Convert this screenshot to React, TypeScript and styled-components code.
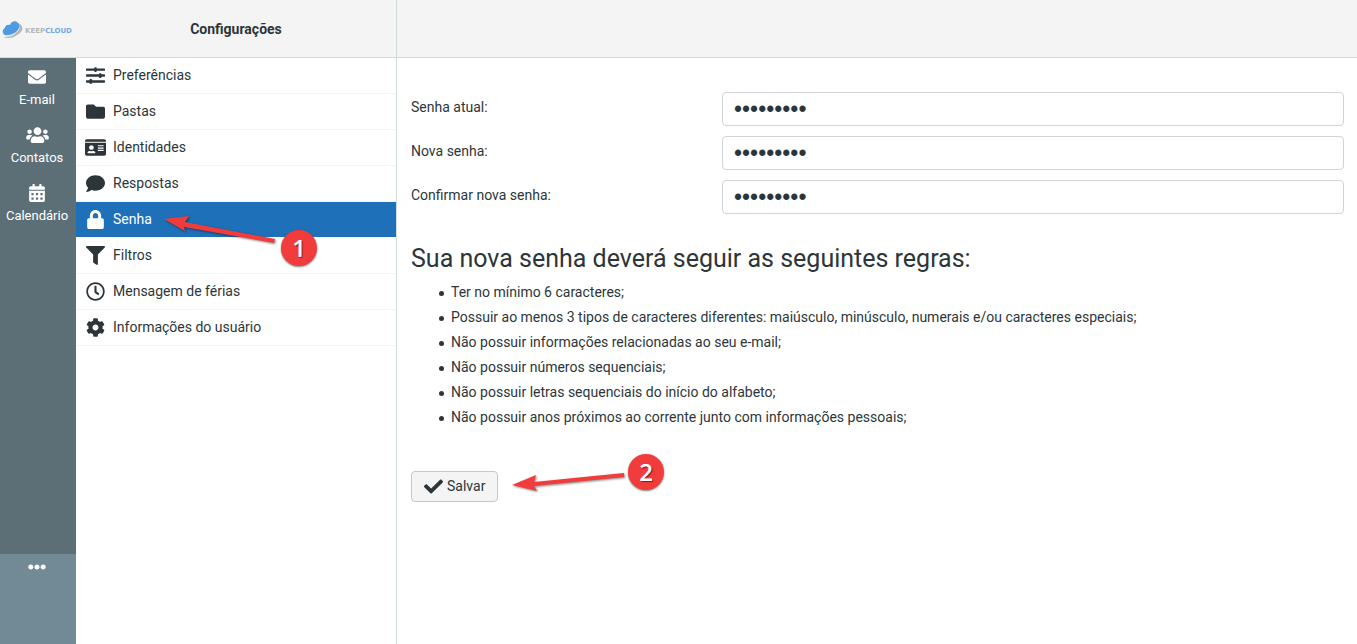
import React from 'react';
import styled, { createGlobalStyle } from 'styled-components';
import type { IconType } from 'react-icons';
import {
  FaCalendarAlt, FaCheck, FaCog, FaComment, FaEllipsisH, FaEnvelope, FaFilter,
  FaFolder, FaIdCard, FaLock, FaRegClock, FaSlidersH, FaUsers,
} from 'react-icons/fa';

const ink = '#2c363a';
const line = '#d4dbde';

const GlobalStyle = createGlobalStyle`
  * { box-sizing: border-box; }
  body {
    margin: 0;
    background: #fff;
    color: ${ink};
    font: 14px/21px Roboto, sans-serif;
  }
`;

const Page = styled.div`
  position: relative;
  display: flex;
  min-height: 100vh;
`;

const TaskBar = styled.div`
  display: flex;
  flex-direction: column;
  flex: 0 0 76px;
  background: #5c6f77;
`;

const PaneHeader = styled.header`
  display: flex;
  align-items: center;
  justify-content: center;
  height: 58px;
  padding-top: 2px;
  background: #f4f4f4;
  border-bottom: 1px solid ${line};
`;

const Logo = styled.a`
  display: flex;
  align-items: center;
  width: 100%;
  padding-left: 2px;
  gap: 2px;
  text-decoration: none;
  font: bold 7px/8px 'DejaVu Sans', sans-serif;
  color: #b4b7ba;
  svg { flex-shrink: 0; }
`;

const LogoName = styled.span`
  padding-top: 3px;
`;

const LogoAccent = styled.span`
  color: #74abe0;
`;

const TaskNav = styled.nav`
  flex: 1;
  display: flex;
  flex-direction: column;
`;

const TaskLink = styled.a`
  display: flex;
  flex-direction: column;
  align-items: center;
  height: 58px;
  padding-top: 10px;
  padding-right: 2px;
  gap: 4px;
  color: #fff;
  font-size: 13px;
  line-height: 20px;
  text-decoration: none;
  svg { height: 18px; }
`;

const MoreButton = styled.button`
  display: flex;
  justify-content: center;
  height: 90px;
  padding: 4px 2px 0 0;
  border: 0;
  background: #728a95;
  color: #fff;
`;

const SettingsPane = styled.div`
  flex: 0 0 321px;
  border-right: 1px solid ${line};
`;

const PaneTitle = styled.h1`
  margin: 0;
  font-size: 14px;
  font-weight: 700;
`;

const SettingsLink = styled.a<{ $active?: boolean }>`
  display: flex;
  align-items: center;
  height: 36px;
  padding: 0 9px;
  gap: 7px;
  border-bottom: 1px solid ${p => (p.$active ? '#fff' : '#f1f3f4')};
  background: ${p => (p.$active ? '#1e70b9' : 'transparent')};
  background-clip: padding-box;
  color: ${p => (p.$active ? '#fff' : ink)};
  text-decoration: none;
`;

const IconSlot = styled.span`
  display: flex;
  justify-content: center;
  flex: 0 0 21px;
`;

const Content = styled.main`
  flex: 1;
  min-width: 0;
`;

const PasswordForm = styled.form`
  padding: 34px 13px 14px 14px;
`;

const Field = styled.div`
  display: grid;
  grid-template-columns: 1fr 2fr;
  margin-bottom: 10px;
`;

const Label = styled.label`
  padding-top: 5px;
`;

const PasswordInput = styled.input`
  width: 100%;
  height: 34px;
  padding: 0 11px;
  border: 1px solid #ced4da;
  border-radius: 4px;
  background: #fff;
  color: ${ink};
  font: 23px/32px 'Liberation Sans', sans-serif;
`;

const RulesTitle = styled.h2`
  margin: 30px 0 6px;
  font-size: 25px;
  line-height: 30px;
  font-weight: 400;
`;

const Rules = styled.ul`
  margin: 0 0 41px;
  padding-left: 28px;
  line-height: 25px;
  list-style: none;
`;

const Rule = styled.li`
  display: flex;
  align-items: center;
  gap: 7px;
  &::before {
    content: '';
    flex: 0 0 5px;
    height: 5px;
    margin-top: 2px;
    border-radius: 50%;
    background: ${ink};
  }
`;

const SaveButton = styled.button`
  display: flex;
  align-items: center;
  height: 31px;
  padding: 0 12px;
  gap: 4px;
  border: 1px solid #c5c8ca;
  border-radius: 4px;
  background: #f4f4f4;
  color: ${ink};
  font: 14px/21px Roboto, sans-serif;
`;

const Arrows = styled.svg`
  position: absolute;
  top: 0;
  left: 0;
  pointer-events: none;
  filter: drop-shadow(1px 1px 1px rgba(0, 0, 0, 0.5));
`;

const Step = styled.span<{ $x: number; $y: number }>`
  position: absolute;
  left: ${p => p.$x}px;
  top: ${p => p.$y}px;
  width: 36px;
  height: 36px;
  border-radius: 50%;
  background: #f23c3c;
  box-shadow: 0 1px 2px rgba(0, 0, 0, 0.5);
  color: #fff;
  font: 600 24px/35px 'Open Sans', sans-serif;
  text-align: center;
  text-shadow: 1px 1px 1px rgba(0, 0, 0, 0.5);
`;

const tasks: { label: string; icon: IconType; size: number }[] = [
  { label: 'E-mail', icon: FaEnvelope, size: 18 },
  { label: 'Contatos', icon: FaUsers, size: 23 },
  { label: 'Calendário', icon: FaCalendarAlt, size: 18 },
];

const sections: { label: string; icon: IconType; size: number }[] = [
  { label: 'Preferências', icon: FaSlidersH, size: 19 },
  { label: 'Pastas', icon: FaFolder, size: 19 },
  { label: 'Identidades', icon: FaIdCard, size: 21 },
  { label: 'Respostas', icon: FaComment, size: 19 },
  { label: 'Senha', icon: FaLock, size: 19 },
  { label: 'Filtros', icon: FaFilter, size: 19 },
  { label: 'Mensagem de férias', icon: FaRegClock, size: 19 },
  { label: 'Informações do usuário', icon: FaCog, size: 19 },
];

const fields = [
  { id: 'current', label: 'Senha atual:' },
  { id: 'new', label: 'Nova senha:' },
  { id: 'confirm', label: 'Confirmar nova senha:' },
];

const rules = [
  'Ter no mínimo 6 caracteres;',
  'Possuir ao menos 3 tipos de caracteres diferentes: maiúsculo, minúsculo, numerais e/ou caracteres especiais;',
  'Não possuir informações relacionadas ao seu e-mail;',
  'Não possuir números sequenciais;',
  'Não possuir letras sequenciais do início do alfabeto;',
  'Não possuir anos próximos ao corrente junto com informações pessoais;',
];

export default function App() {
  return (
    <>
      <GlobalStyle />
      <Page>
        <TaskBar>
          <PaneHeader>
            <Logo href="#home">
              <svg width="21" height="18" viewBox="0 0 21 18">
                <path d="M18 3c4 3 3 8-3 11-4 3-9 4-14 2 5 0 10-1 13-4 3-2 4-5 4-9z" fill="#b4b6b8" />
                <path d="M3 14C0 13 0 8 3 7c0-3 3-4 5-3 1-4 6-5 8-2 2 1 2 3 1 5-2 5-9 8-14 7z" fill="#4f9be0" />
              </svg>
              <LogoName>KEEP<LogoAccent>CLOUD</LogoAccent></LogoName>
            </Logo>
          </PaneHeader>
          <TaskNav>
            {tasks.map(({ label, icon: Icon, size }) => (
              <TaskLink key={label} href="#task"><Icon size={size} />{label}</TaskLink>
            ))}
          </TaskNav>
          <MoreButton type="button" aria-label="Mais"><FaEllipsisH size={18} /></MoreButton>
        </TaskBar>
        <SettingsPane>
          <PaneHeader><PaneTitle>Configurações</PaneTitle></PaneHeader>
          <nav>
            {sections.map(({ label, icon: Icon, size }) => (
              <SettingsLink key={label} href="#section" $active={label === 'Senha'}>
                <IconSlot><Icon size={size} /></IconSlot>
                {label}
              </SettingsLink>
            ))}
          </nav>
        </SettingsPane>
        <Content>
          <PaneHeader />
          <PasswordForm>
            {fields.map(f => (
              <Field key={f.id}>
                <Label htmlFor={f.id}>{f.label}</Label>
                <PasswordInput id={f.id} type="password" defaultValue="123456789" />
              </Field>
            ))}
            <RulesTitle>Sua nova senha deverá seguir as seguintes regras:</RulesTitle>
            <Rules>{rules.map(r => <Rule key={r}>{r}</Rule>)}</Rules>
            <SaveButton type="button"><FaCheck size={19} />Salvar</SaveButton>
          </PasswordForm>
        </Content>
        <Arrows width="680" height="520" viewBox="0 0 680 520" fill="#f23c3c">
          <path d="M164 219l25-3-4 6 90 17-1 4-90-16 1 4z" />
          <path d="M512 485l24-10-2 7 90-9v4l-90 9 3 5z" />
        </Arrows>
        <Step $x={281} $y={230}>1</Step>
        <Step $x={628} $y={454}>2</Step>
      </Page>
    </>
  );
}
